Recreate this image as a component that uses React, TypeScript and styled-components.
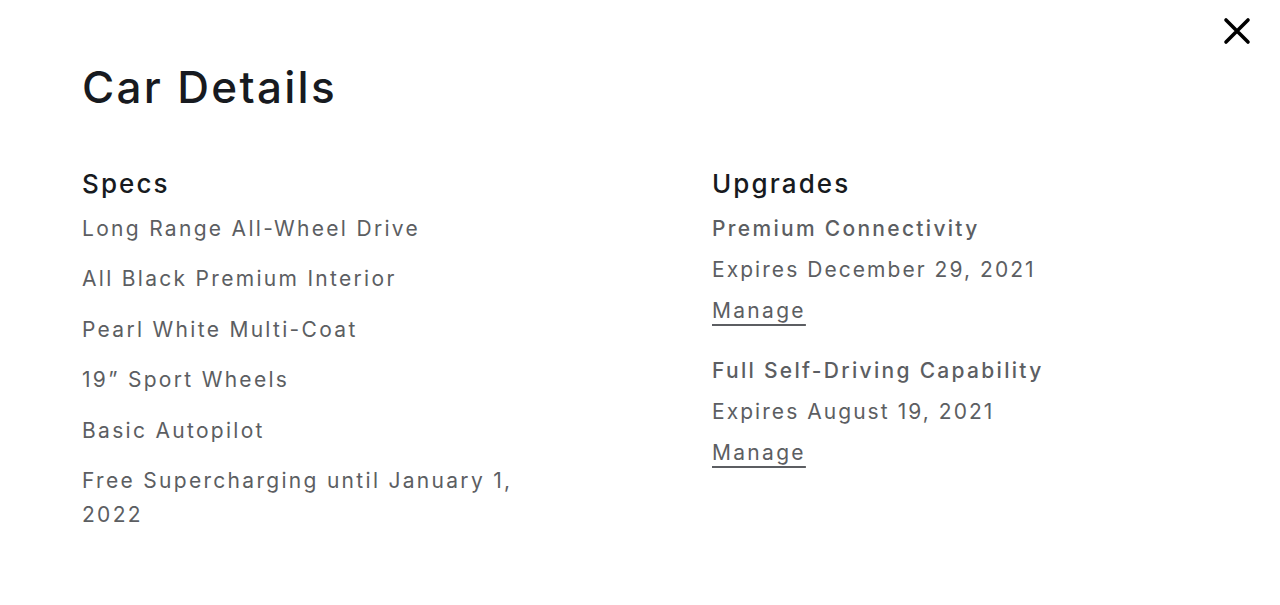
import styled, { createGlobalStyle } from "styled-components";

const GlobalStyle = createGlobalStyle`
  body {
    margin: 0;
    background: #ffffff;
    font-family: "Inter", "Liberation Sans", sans-serif;
  }
`;

const Modal = styled.div`
  position: relative;
  width: 1280px;
  height: 605px;
  box-sizing: border-box;
  padding: 61px 82px 0;
  background: #ffffff;
`;

const CloseButton = styled.button`
  position: absolute;
  top: 15px;
  right: 27px;
  width: 32px;
  height: 32px;
  padding: 0;
  border: none;
  background: none;
  cursor: pointer;
  display: flex;
  align-items: center;
  justify-content: center;
`;

const Title = styled.h1`
  margin: 0;
  font-size: 44px;
  line-height: 53px;
  font-weight: 500;
  letter-spacing: 2.3px;
  color: #171a20;
`;

const Columns = styled.div`
  display: grid;
  grid-template-columns: 486px 486px;
  column-gap: 144px;
  margin-top: 54px;
`;

const Column = styled.section`
  display: flex;
  flex-direction: column;
`;

const Heading = styled.h2`
  margin: 0 0 12px;
  font-size: 26px;
  line-height: 32px;
  font-weight: 500;
  letter-spacing: 2.1px;
  color: #171a20;
`;

const SpecList = styled.ul`
  list-style: none;
  margin: 0;
  padding: 0;
  display: flex;
  flex-direction: column;
  gap: 16.4px;
`;

const Spec = styled.li`
  font-size: 21px;
  line-height: 34px;
  letter-spacing: 2.3px;
  color: #5c5e62;
`;

const Upgrade = styled.div`
  display: flex;
  flex-direction: column;
  align-items: flex-start;
  gap: 7px;
  & + & {
    margin-top: 26px;
  }
`;

interface LineProps {
  strong?: boolean;
}

const Line = styled.div<LineProps>`
  font-size: 21px;
  line-height: 34px;
  letter-spacing: ${(p) => (p.strong ? "2.3px" : "2.05px")};
  font-weight: ${(p) => (p.strong ? 500 : 400)};
  color: #5c5e62;
`;

const ManageLink = styled.a`
  font-size: 21px;
  line-height: 34px;
  letter-spacing: 2.3px;
  color: #5c5e62;
  text-decoration: underline;
  text-decoration-thickness: 2px;
  text-underline-offset: 6px;
  cursor: pointer;
`;

const specs = [
  "Long Range All-Wheel Drive",
  "All Black Premium Interior",
  "Pearl White Multi-Coat",
  "19\u201d Sport Wheels",
  "Basic Autopilot",
  "Free Supercharging until January 1, 2022",
];

const upgrades = [
  { name: "Premium Connectivity", expires: "Expires December 29, 2021" },
  { name: "Full Self-Driving Capability", expires: "Expires August 19, 2021" },
];

export default function App() {
  return (
    <>
      <GlobalStyle />
      <Modal>
        <CloseButton aria-label="Close">
          <svg width="28" height="28" viewBox="0 0 28 28">
            <path
              d="M3 3 L25 25 M25 3 L3 25"
              stroke="#000"
              strokeWidth="3.6"
              strokeLinecap="round"
            />
          </svg>
        </CloseButton>
        <Title>Car Details</Title>
        <Columns>
          <Column>
            <Heading>Specs</Heading>
            <SpecList>
              {specs.map((s) => (
                <Spec key={s}>{s}</Spec>
              ))}
            </SpecList>
          </Column>
          <Column>
            <Heading>Upgrades</Heading>
            {upgrades.map((u) => (
              <Upgrade key={u.name}>
                <Line strong>{u.name}</Line>
                <Line>{u.expires}</Line>
                <ManageLink>Manage</ManageLink>
              </Upgrade>
            ))}
          </Column>
        </Columns>
      </Modal>
    </>
  );
}
